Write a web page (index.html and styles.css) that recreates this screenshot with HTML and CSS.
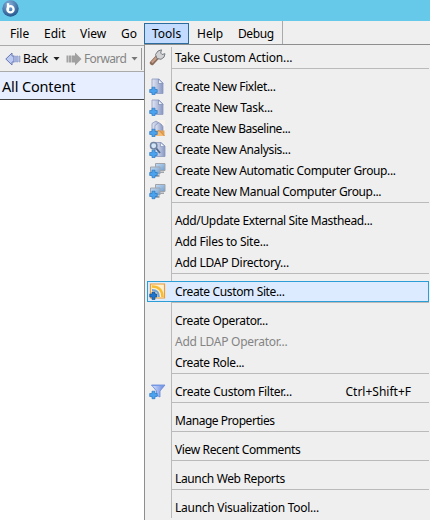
FILE: index.html
```
<!DOCTYPE html>
<html lang="en">
<head>
<meta charset="utf-8">
<title>Console</title>
<link rel="stylesheet" href="styles.css">
</head>
<body>
<svg class="defs" aria-hidden="true">
  <defs>
    <linearGradient id="gp" x1="0" x2="1"><stop offset="0" stop-color="#e4e8f4"/><stop offset="1" stop-color="#8696c4"/></linearGradient>
    <linearGradient id="gs" x1="0" y1="0" x2="1" y2="1"><stop offset="0" stop-color="#c4dcf4"/><stop offset="1" stop-color="#6f9dcd"/></linearGradient>
    <linearGradient id="gf" x1="0" x2="1"><stop offset="0" stop-color="#d5e4ff"/><stop offset="1" stop-color="#6685dc"/></linearGradient>
    <radialGradient id="gb" cx=".4" cy=".25" r=".75"><stop offset="0" stop-color="#83aeda"/><stop offset="1" stop-color="#28598f"/></radialGradient>
    <path id="plus" d="M3 9.200h3v2.300h2.200v3H6v2.200H3v-2.200H.7v-3H3z" fill="#4ba3ef" stroke="#2d78c4" stroke-width=".7"/>
    <g id="page"><path d="M3 1h7l4 4V15.500H3z" fill="url(#gp)" stroke="#8c9ac0" stroke-width=".8"/><path d="M9.500 1v4.500h4.500z" fill="#f0f3fb" stroke="#7788b5" stroke-width=".7"/></g>
    <g id="pcs">
      <path d="M6.500 1.500h9.500v7H6.500z" fill="url(#gs)" stroke="#a0a4aa"/><path d="M10 9.500h5v1.500h-5z" fill="#a0a3a8"/>
      <path d="M1.500 5h9.500v7H1.500z" fill="url(#gs)" stroke="#a0a4aa"/><path d="M5 13h5.500v1.800H5z" fill="#95999f"/>
    </g>
  </defs>
</svg>
<div class="window">
  <header class="titlebar">
    <svg class="logo" viewBox="0 0 17 17"><circle cx="8.500" cy="8.500" r="8.200" fill="url(#gb)"/><path d="M6 3.200v7" stroke="#fff" stroke-width="2.300" fill="none"/><circle cx="8.500" cy="9.200" r="3.100" stroke="#fff" stroke-width="2.300" fill="none"/></svg>
  </header>
  <nav class="menubar">
    <span class="file">File</span><span class="edit">Edit</span><span class="view">View</span><span class="go">Go</span><span class="tools">Tools</span><span class="help">Help</span><span class="debug">Debug</span>
  </nav>
  <div class="side">
    <div class="toolbar">
      <svg class="arrow" viewBox="0 0 16 14"><path d="M.8 7 7 1v3h2v6H7v3z" fill="#bdcbf3" stroke="#6878b5"/><path d="M9 4h1.500v6H9zM11.500 4h1.500v6h-1.500zM14 4h1v6h-1z" fill="#b3bfe9" stroke="#8794c8" stroke-width=".6"/></svg>
      <span class="back">Back</span><i class="caret"></i>
      <svg class="arrow fwd" viewBox="0 0 16 14"><path d="M15.500 7 9 .5V3.500H5.500v7H9v3z" fill="#a0a0a0"/><path d="M.5 3.500H2v7H.5zM2.500 3.500h2.500v7H2.500z" fill="#a3a3a3"/></svg>
      <span class="forward">Forward</span><i class="caret dim"></i><i class="bar"></i>
    </div>
    <h1 class="heading">All Content</h1>
  </div>
  <div class="menu">
    <div class="row wide"><svg viewBox="0 0 17 17"><path d="M3 14 9 7.500" stroke="#8e6c5b" stroke-width="4.400" stroke-linecap="round"/><path d="M2.800 13.500 8 8" stroke="#c49e89" stroke-width="2"/><path d="M8 9.500 6.500 5.500 9 2l3.500-1.200-.8 3.200L13 5.500l3-.8-1 3.500L12 10.300z" fill="#d0d2d4" stroke="#777b80" stroke-width="1"/></svg><span>Take Custom Action...</span></div>
    <hr>
    <div class="row"><svg viewBox="0 0 17 17"><use href="#page"/><use href="#plus"/></svg><span>Create New Fixlet...</span></div>
    <div class="row mid"><svg viewBox="0 0 17 17"><use href="#page"/><use href="#plus"/></svg><span>Create New Task...</span></div>
    <div class="row tight"><svg viewBox="0 0 17 17"><path d="M6 0h10v16H6z" fill="#f8f3ed"/><path d="M3 3.500 7 1l6 4v7H3z" fill="url(#gp)" stroke="#8794bb" stroke-width=".8"/><path d="M6 5.500 10 2.500l4 4V12H6z" fill="url(#gp)" stroke="#8794bb" stroke-width=".7"/><path d="M3 10.500h12.500v5.500H3z" fill="#e3a158"/><path d="m3 16 7-5.500 5.500 5.500" fill="#f3bd78" stroke="#c98136" stroke-width=".8"/><use href="#plus"/></svg><span>Create New Baseline...</span></div>
    <div class="row"><svg viewBox="0 0 17 17"><path d="M6 1.500h6L16 5v10.500H6z" fill="url(#gp)" stroke="#8b98bd" stroke-width=".8"/><path d="M11.500 1.500V5.500H16z" fill="#f2f4fb" stroke="#7788b5" stroke-width=".6"/><path d="m7 7 4 5" stroke="#526b91" stroke-width="2"/><circle cx="4.700" cy="4.700" r="3.200" fill="#d3e6f8" stroke="#6f84a3" stroke-width="1.500"/><use href="#plus"/></svg><span>Create New Analysis...</span></div>
    <div class="row"><svg viewBox="0 0 17 17"><use href="#pcs"/><use href="#plus" y="-1"/></svg><span>Create New Automatic Computer Group...</span></div>
    <div class="row"><svg viewBox="0 0 17 17"><use href="#pcs"/><use href="#plus" y="-1"/></svg><span>Create New Manual Computer Group...</span></div>
    <hr>
    <div class="row"><span>Add/Update External Site Masthead...</span></div>
    <div class="row mid"><span>Add Files to Site...</span></div>
    <div class="row mid"><span>Add LDAP Directory...</span></div>
    <hr>
    <div class="row active"><svg viewBox="0 0 17 17"><path d="M1.500 1h14v14h-14z" fill="#fff0cf" stroke="#ee9c35" stroke-width="1.200"/><path d="M3 3.500c7 0 10.500 4 10.500 10.500" fill="none" stroke="#f7bd36" stroke-width="2.600"/><path d="M3 7c4.500 0 7 2.500 7 7" fill="none" stroke="#72a4d8" stroke-width="1.900"/><path d="M3 10c2.500 0 4 1.500 4 4" fill="none" stroke="#5c8fc8" stroke-width="1.600"/><path d="M3 9h3v2h2v3H6v2.500H3V14H.7v-3H3z" fill="#1d74cc" stroke="#1a4c86" stroke-width=".6"/></svg><span>Create Custom Site...</span></div>
    <hr>
    <div class="row"><span>Create Operator...</span></div>
    <div class="row mid disabled"><span>Add LDAP Operator...</span></div>
    <div class="row"><span>Create Role...</span></div>
    <hr>
    <div class="row mid"><svg viewBox="0 0 17 17"><path d="M2.500 2h13.500L11 8v6l-3.500-1.800V8z" fill="url(#gf)" stroke="#6687d8" stroke-width=".8"/><path d="M2.500 2.500h13" stroke="#7598e5"/><use href="#plus" y="-1"/></svg><span>Create Custom Filter...</span><span class="key">Ctrl+Shift+F</span></div>
    <hr>
    <div class="row tight"><span>Manage Properties</span></div>
    <hr>
    <div class="row"><span>View Recent Comments</span></div>
    <hr>
    <div class="row"><span>Launch Web Reports</span></div>
    <hr>
    <div class="row mid"><span>Launch Visualization Tool...</span></div>
  </div>
</div>
</body>
</html>
```
FILE: styles.css
```
* { box-sizing: border-box; }
body { margin: 0; background: #fff; font: 12px/20px "Noto Sans", "Open Sans", sans-serif; color: #000; }
.defs { position: absolute; width: 0; height: 0; }
.window { position: relative; width: 430px; height: 520px; overflow: hidden; }
.titlebar { height: 21px; background: #66c9ea; }
.logo { display: block; width: 17px; height: 17px; margin-left: 2px; }
.menubar { display: flex; width: 283px; height: 24px; padding-top: 2px; border-right: 1px solid #aaa; }
.menubar::before { content: ""; position: absolute; z-index: -1; left: 0; top: 21px; width: 430px; height: 24px; background: #efefef; }
.menubar span { height: 21px; line-height: 22px; white-space: nowrap; }
.file { width: 44px; padding-left: 10px; }
.edit { width: 36px; }
.view { width: 41px; }
.go { width: 23px; }
.menubar .tools { width: 45px; padding-left: 7px; line-height: 20px; background: #c2dbff; border: 1px solid #2b6c9f; }
.help { width: 49px; padding-left: 8px; }
.menubar .debug { width: 44px; letter-spacing: -.4px; }
.side { width: 144px; }
.toolbar { display: flex; align-items: center; height: 27px; background: #efefef; border-top: 1px solid #aaa; border-bottom: 1px solid #aaa; }
.arrow { width: 16px; height: 14px; margin-left: 5px; flex: none; }
.back { width: 29px; margin-left: 2px; letter-spacing: -.5px; }
.caret { width: 7px; height: 4px; margin-left: 1px; flex: none; background: #222; clip-path: polygon(0 0, 100% 0, 50% 100%); }
.caret.dim { background: #777; }
.arrow.fwd { margin-left: 6px; }
.forward { width: 46px; margin-left: 2px; color: #858585; letter-spacing: -.65px; }
.bar { width: 1px; height: 22px; margin-left: 3px; background: #999; }
.heading { margin: 0; height: 28px; padding-left: 2px; background: #e6eeff; border-bottom: 1px solid #444; font-size: 14.5px; line-height: 28px; font-weight: 400; letter-spacing: -.15px; }
.menu { position: absolute; left: 144px; top: 44px; width: 286px; height: 476px; padding: 2px 1px 0 2px; background: #efefef; border-top: 1px solid #8e8e8e; border-left: 1px solid #8e8e8e; }
.menu::before { content: ""; position: absolute; left: 26px; top: 2px; width: 1px; height: 471px; background: #bababa; }
.menu hr { height: 8px; margin: 0 0 0 25px; border: 0; border-top: 1px solid #bababa; }
.row { position: relative; display: flex; height: 21px; line-height: 21px; padding-left: 28px; white-space: nowrap; letter-spacing: -.36px; }
.row.wide { letter-spacing: -.16px; }
.row.mid { letter-spacing: -.26px; }
.row.tight { letter-spacing: -.46px; }
.row svg { width: 17px; height: 17px; margin: 2px 9px 0 -26px; flex: none; }
.row.active { background: #dcebff; border: 1px solid #2b9fd5; line-height: 19px; padding-left: 27px; }
.row.active svg { margin-top: 1px; }
.disabled { color: #848484; }
.row .key { margin-left: auto; padding-right: 18px; letter-spacing: 0; }
```
